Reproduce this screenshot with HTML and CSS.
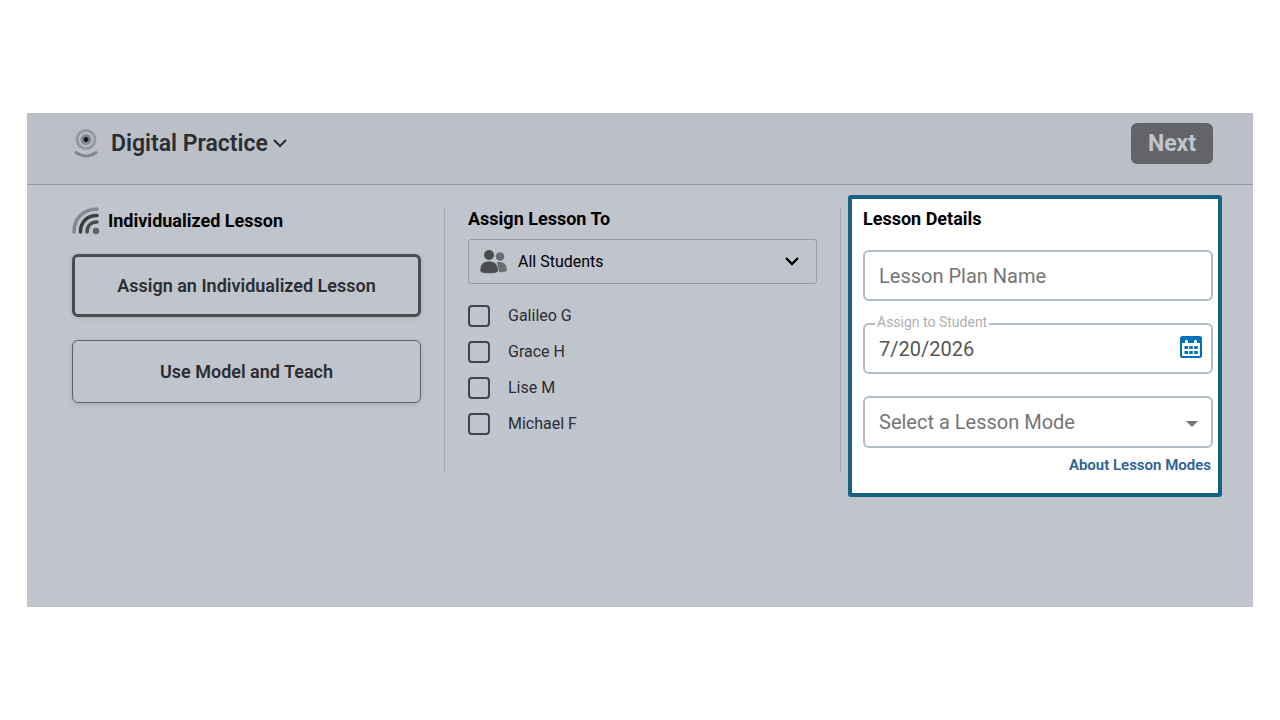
FILE: index.html
```html
<!DOCTYPE html>
<html lang="en">
<head>
  <meta charset="UTF-8">
  <meta name="viewport" content="width=device-width, initial-scale=1">
  <title>Digital Practice</title>
  <link rel="stylesheet" href="styles.css">
</head>
<body>
  <main class="panel">
    <header class="topbar">
      <button type="button" class="product">
        <svg class="product-icon" width="28" height="32" viewBox="0 0 28 32" fill="none">
          <circle cx="14" cy="11.500" r="9" stroke="#9699a1" stroke-width="3"/>
          <circle cx="14" cy="11.500" r="5.500" fill="#85888f"/>
          <path d="M14 9v5M11.500 11.500h5" stroke="#111315" stroke-width="2.500"/>
          <path d="M4 24.500q10 7 20 0" stroke="#85888f" stroke-width="3" stroke-linecap="round"/>
        </svg>
        <span>Digital Practice</span>
        <svg width="14" height="10" viewBox="0 0 14 10" fill="none" stroke="#2b2e31" stroke-width="2">
          <path d="M1 1l6 6 6-6"/>
        </svg>
      </button>
      <button type="button" class="next">Next</button>
    </header>

    <div class="columns">
      <section class="lesson-type">
        <h2>
          <svg width="28" height="28" viewBox="0 0 28 28" fill="none" stroke-width="3.500" stroke-linecap="round">
            <path d="M2 25C2 11 12 2 25 2" stroke="#85888f"/>
            <path d="M8.500 25C8.500 15 15 8.500 25 8.500" stroke="#3a3c3f"/>
            <path d="M15 25C15 19 19 15 25 15" stroke="#4a4c50"/>
            <circle cx="24" cy="24" r="3.200" fill="#606368"/>
          </svg>
          Individualized Lesson
        </h2>
        <button type="button" class="choice selected">Assign an Individualized Lesson</button>
        <button type="button" class="choice">Use Model and Teach</button>
      </section>

      <div class="divider"></div>

      <section class="assign">
        <h2 id="assignTitle">Assign Lesson To</h2>
        <div class="group-select">
          <svg class="people" width="28" height="24" viewBox="0 0 28 24">
            <circle cx="20" cy="6.500" r="4.300" fill="#6b6e73"/>
            <path d="M17 12h4q6 1 6 9-3 1.500-8 1z" fill="#6b6e73"/>
            <path d="M0 21q0-10 9-10t9.500 10q-1 2.500-9.500 2.500T0 21z" fill="#4a4c50" stroke="#c0c4cd" stroke-width=".5"/>
            <circle cx="9" cy="5" r="5" fill="#4a4c50"/>
          </svg>
          <select aria-labelledby="assignTitle">
            <option>All Students</option>
          </select>
          <svg class="chevron" width="14" height="10" viewBox="0 0 14 10" fill="none" stroke="#000" stroke-width="2.400">
            <path d="M1 1l6 6 6-6"/>
          </svg>
        </div>
        <ul class="students">
          <li><label><input type="checkbox">Galileo G</label></li>
          <li><label><input type="checkbox">Grace H</label></li>
          <li><label><input type="checkbox">Lise M</label></li>
          <li><label><input type="checkbox">Michael F</label></li>
        </ul>
      </section>

      <div class="divider"></div>

      <section class="details">
        <h2>Lesson Details</h2>
        <div class="field">
          <input type="text" placeholder="Lesson Plan Name" aria-label="Lesson Plan Name">
        </div>
        <div class="field">
          <label for="assignDate">Assign to Student</label>
          <input type="text" id="assignDate" value="7/20/2026">
          <button type="button" class="calendar" aria-label="Open calendar">
            <svg width="22" height="22" viewBox="0 0 22 22">
              <rect width="22" height="22" rx="2.500" fill="#0072bc"/>
              <path d="M2 7h18v12q0 1-1 1H3q-1 0-1-1z" fill="#fff"/>
              <path d="M5 8V5q1.500-2.500 3 0v3zM14 8V5q1.500-2.500 3 0v3z" fill="#fff"/>
              <path d="M4.500 10h3.500v3H4.500zM9.300 10h3.500v3H9.300zM14.200 10h3.500v3h-3.500zM4.500 15h3.500v3H4.500zM9.300 15h3.500v3H9.300zM14.200 15h3.500v3h-3.500z" fill="#0072bc"/>
            </svg>
          </button>
        </div>
        <div class="field">
          <select aria-label="Lesson mode">
            <option>Select a Lesson Mode</option>
          </select>
          <svg class="caret" width="12" height="6" viewBox="0 0 12 6"><path d="M0 0h12L6 6z" fill="#757575"/></svg>
        </div>
        <a href="#" class="about">About Lesson Modes</a>
      </section>
    </div>
  </main>
</body>
</html>
```
FILE: styles.css
```css
* { box-sizing: border-box; }
body {
  margin: 0;
  padding: 113px 27px;
  background: #fff;
  font-family: Roboto, Arial, sans-serif;
  color: #2b2e31;
}
button, input, select { font-family: inherit; color: inherit; }
button { cursor: pointer; }

.panel {
  background: #c0c4cd;
  padding-bottom: 110px;
}

/* top bar */
.topbar {
  display: flex;
  align-items: center;
  justify-content: space-between;
  padding: 10px 40px 20px 45px;
  background: #bbbfc8;
  border-bottom: 1px solid #989ca5;
}
.product {
  display: flex;
  align-items: center;
  gap: 5px;
  padding: 0;
  border: none;
  background: none;
  font-size: 23px;
  font-weight: 600;
  line-height: 28px;
}
.product-icon { margin-right: 6px; }
.next {
  width: 82px;
  height: 41px;
  border: none;
  border-radius: 6px;
  background: #636468;
  color: #c0c4cd;
  font-size: 23px;
  font-weight: 700;
}

/* three columns */
.columns {
  display: grid;
  grid-template-columns: 1fr 1px 1fr 1px 1fr;
  column-gap: 23px;
  align-items: start;
  padding: 22px 40px 0 45px;
}
.divider {
  align-self: start;
  height: 266px;
  background: #a6aab3;
}
h2 {
  margin: 0;
  color: #000;
  font-size: 18px;
  font-weight: 700;
  line-height: 24px;
}

.lesson-type h2 {
  display: flex;
  align-items: center;
  gap: 8px;
  height: 28px;
  margin-bottom: 19px;
}
.choice {
  display: block;
  width: 100%;
  height: 63px;
  margin-bottom: 23px;
  border: 1px solid #606368;
  border-radius: 6px;
  background: #c0c4cd;
  box-shadow: 0 1px 5px #0002;
  font-size: 18px;
  font-weight: 600;
}
.choice.selected { border: 3px solid #4a4c50; }

.group-select {
  position: relative;
  height: 45px;
  margin: 8px 0 21px;
}
.group-select select {
  width: 100%;
  height: 100%;
  padding: 0 40px 0 49px;
  border: 1px solid #989ca5;
  border-radius: 3px;
  background: transparent;
  color: #000;
  font-size: 16px;
  appearance: none;
}
.people { position: absolute; left: 12px; top: 11px; }
.chevron { position: absolute; right: 18px; top: 18px; }

.students {
  display: grid;
  gap: 14px;
  margin: 0;
  padding: 0;
  list-style: none;
}
.students label {
  display: flex;
  align-items: center;
  gap: 18px;
  font-size: 16px;
  line-height: 22px;
}
.students input {
  width: 22px;
  height: 22px;
  margin: 0;
  border: 2px solid #444548;
  border-radius: 4px;
  appearance: none;
}

/* highlighted lesson details */
.details {
  margin: -12px -9px 0 -16px;
  padding: 8px 5px 19px 11px;
  border: 4px solid #176184;
  border-radius: 3px;
  background: #fff;
}
.details h2 { margin-bottom: 19px; }
.field {
  position: relative;
  margin-bottom: 22px;
}
.field input, .field select {
  display: block;
  width: 100%;
  height: 51px;
  padding: 0 40px 0 14px;
  border: 2px solid #b0bec5;
  border-radius: 6px;
  background: #fff;
  color: #555;
  font-size: 20px;
  appearance: none;
}
.field select { height: 52px; }
.field select, .field input::placeholder { color: #757575; }
.field label {
  position: absolute;
  left: 12px;
  top: -9px;
  padding: 0 2px;
  background: #fff;
  color: #b0b0b0;
  font-size: 14px;
  line-height: 16px;
}
.calendar {
  position: absolute;
  right: 11px;
  top: 13px;
  padding: 0;
  border: none;
  background: none;
}
.calendar svg { display: block; }
.caret { position: absolute; right: 15px; top: 25px; }
.field:last-of-type { margin-bottom: 8px; }
.about {
  display: block;
  padding-right: 2px;
  color: #2a6199;
  font-size: 15px;
  font-weight: 600;
  line-height: 18px;
  text-align: right;
  text-decoration: none;
}
```
